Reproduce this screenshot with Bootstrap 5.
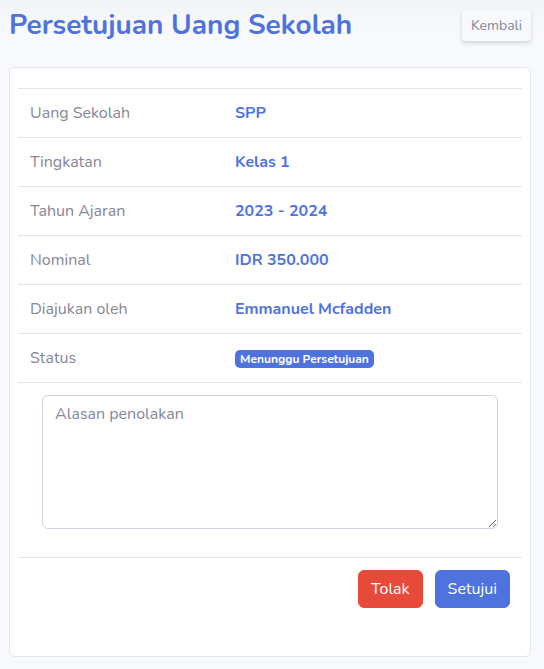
<!DOCTYPE html>
<html lang="id">
<head>
<meta charset="utf-8">
<meta name="viewport" content="width=device-width, initial-scale=1">
<title>Persetujuan Uang Sekolah</title>
<link href="https://cdn.jsdelivr.net/npm/bootstrap@5.3.0/dist/css/bootstrap.min.css" rel="stylesheet">
<style>
  :root { --brand: #4e73df; --ink: #858796; --line: #e3e6f0; }
  body {
    font-family: Nunito, "Open Sans", sans-serif;
    font-size: 16px;
    line-height: 24px;
    color: var(--ink);
    background: #f8f9fc linear-gradient(#f2f3f7, #f8f9fc 28px) no-repeat;
  }
  .page { padding: 10px 13px 12px 9px; }
  .page-head { margin-bottom: 26px; }
  .page-title { font-size: 28px; line-height: 30px; font-weight: 700; color: var(--brand); }
  .btn { --bs-btn-font-size: 16px; --bs-btn-line-height: 24px; }
  .btn-back {
    --bs-btn-font-size: 14px; --bs-btn-line-height: 21px;
    --bs-btn-color: var(--ink); --bs-btn-bg: #f8f9fc; --bs-btn-border-color: #f8f9fc;
    --bs-btn-border-radius: 3px;
    box-shadow: 0 2px 4px rgba(58, 59, 69, .2);
  }
  .btn-approve { --bs-btn-color: #fff; --bs-btn-bg: #4e73df; --bs-btn-border-color: #4e73df; --bs-btn-hover-color: #fff; --bs-btn-hover-bg: #2e59d9; }
  .btn-reject { --bs-btn-color: #fff; --bs-btn-bg: #e74a3b; --bs-btn-border-color: #e74a3b; --bs-btn-hover-color: #fff; --bs-btn-hover-bg: #e02d1b; }
  .panel { --bs-card-border-color: var(--line); --bs-card-spacer-x: 8px; --bs-card-spacer-y: 20px; }
  .detail { --bs-table-color: var(--ink); --bs-table-bg: transparent; color: var(--ink); border-collapse: separate; border-spacing: 0; }
  .detail > tbody > tr > * { padding: 12px; border-width: 1px 0 0; border-color: var(--line); color: var(--ink); }
  .detail th { width: 205px; }
  .detail > tbody > tr > .value { font-weight: 700; color: var(--brand); }
  .status { font-size: 12px; line-height: 12px; padding: 3px 5px; background: var(--brand); border-radius: 5px; }
  .reason, .reason::placeholder { color: var(--ink); }
  .reason { font-size: 16px; line-height: 24px; border-color: #d1d3e2; }
</style>
</head>
<body>
<main class="page">
  <header class="page-head d-flex justify-content-between align-items-start">
    <h1 class="page-title mb-0">Persetujuan Uang Sekolah</h1>
    <a href="#" class="btn btn-sm btn-back">Kembali</a>
  </header>
  <section class="card panel">
    <div class="card-body">
      <form>
        <table class="table detail mb-3">
          <tbody>
            <tr><th scope="row" class="fw-normal">Uang Sekolah</th><td class="value">SPP</td></tr>
            <tr><th scope="row" class="fw-normal">Tingkatan</th><td class="value">Kelas 1</td></tr>
            <tr><th scope="row" class="fw-normal">Tahun Ajaran</th><td class="value">2023 - 2024</td></tr>
            <tr><th scope="row" class="fw-normal">Nominal</th><td class="value">IDR 350.000</td></tr>
            <tr><th scope="row" class="fw-normal">Diajukan oleh</th><td class="value">Emmanuel Mcfadden</td></tr>
            <tr><th scope="row" class="fw-normal">Status</th><td class="value"><span class="badge status">Menunggu Persetujuan</span></td></tr>
            <tr>
              <td colspan="2">
                <div class="px-2 mx-1 mb-3">
                  <textarea class="form-control reason d-block" rows="5" placeholder="Alasan penolakan" aria-label="Alasan penolakan"></textarea>
                </div>
              </td>
            </tr>
            <tr>
              <td colspan="2">
                <div class="d-flex justify-content-end gap-2">
                  <button type="button" class="btn btn-reject me-1">Tolak</button>
                  <button type="submit" class="btn btn-approve">Setujui</button>
                </div>
              </td>
            </tr>
          </tbody>
        </table>
      </form>
    </div>
  </section>
</main>
<script src="https://cdn.jsdelivr.net/npm/bootstrap@5.3.0/dist/js/bootstrap.bundle.min.js"></script>
</body>
</html>
